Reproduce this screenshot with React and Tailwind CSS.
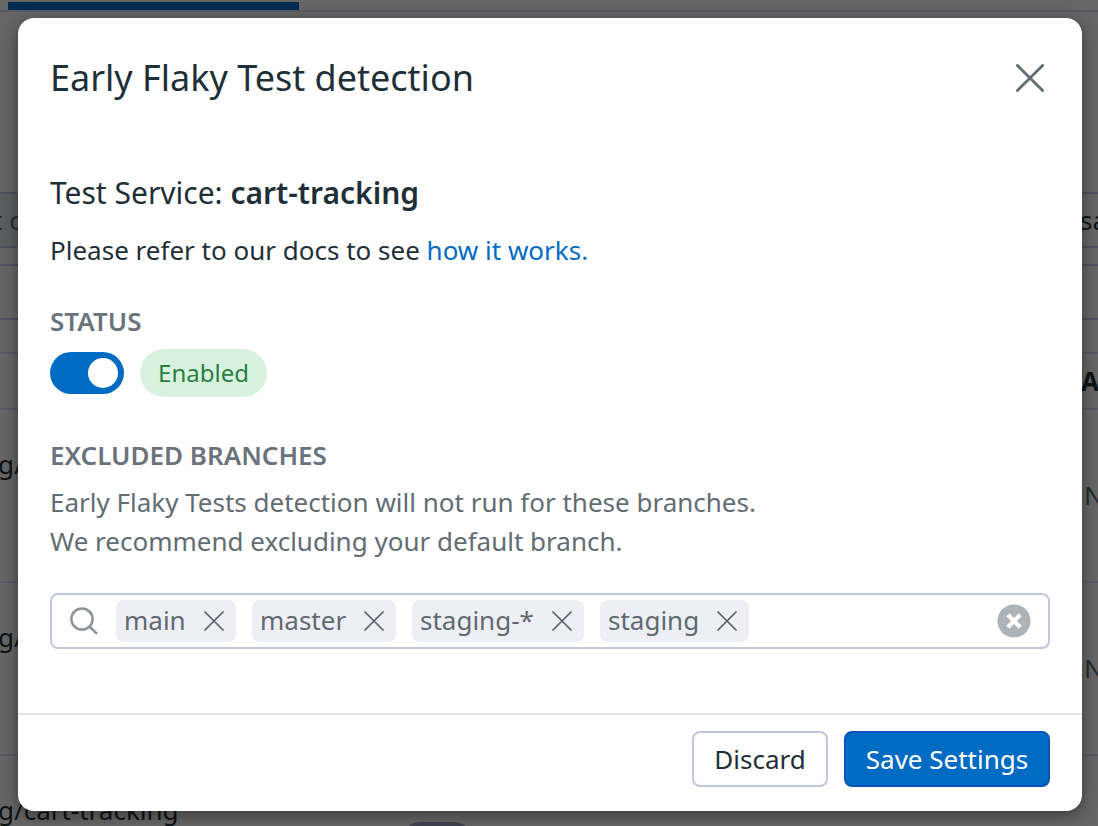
import React from 'react';

function Cross({ className, width }) {
  return (
    <svg viewBox="0 0 20 20" fill="none" stroke="currentColor" strokeWidth={width} strokeLinecap="round" className={className}>
      <path d="M1 1 19 19M19 1 1 19" />
    </svg>
  );
}

function Tag({ label, className }) {
  return (
    <span className={`flex h-[42px] shrink-0 items-center justify-between rounded-lg bg-[#eeeff5] pr-3 pl-2 ${className}`}>
      <span className="pb-[2px] leading-9 whitespace-nowrap">{label}</span>
      <Cross width={1.7} className="size-5 text-[#566069]" />
    </span>
  );
}

function Row({ name, className }) {
  return (
    <div className={`flex shrink-0 justify-between overflow-hidden border-[#5b5b64] ${className}`}>
      <span className="-ml-[2px] pt-[34px] leading-[40px] whitespace-nowrap text-[#0d1417]">{name}</span>
      <span className="w-[14px] shrink-0 pt-[65px] leading-[40px] text-[#272c2f]">N</span>
    </div>
  );
}

function Backdrop() {
  return (
    <div className="flex h-full flex-col overflow-hidden bg-[#666] text-[26px]">
      <div className="h-3 shrink-0 border-b-2 border-[#5b5b64] pt-[2px] pl-2">
        <div className="h-2 w-[291px] bg-[#002c52]" />
      </div>
      <div className="mt-[180px] flex h-14 shrink-0 items-center justify-between border-y-2 border-[#50545f]">
        <div className="flex h-full w-[540px] items-center bg-[#5d5e63]">
          <span className="-ml-[7px] leading-10 text-[#272c2f]">t c</span>
        </div>
        <span className="w-[18px] overflow-hidden leading-10 text-[#0d1417]">sa</span>
      </div>
      <div className="mt-4 h-14 shrink-0 border-y-2 border-[#50545f]" />
      <div className="mt-8 flex h-[58px] shrink-0 items-center justify-end border-y-2 border-[#5b5b64]">
        <span className="w-[17px] font-bold text-[#0d1417]">A</span>
      </div>
      <Row name="g/" className="h-[173px] border-b-2" />
      <Row name="g/" className="h-[173px] border-b-2" />
      <div className="flex h-[70px] shrink-0 overflow-hidden">
        <span className="-ml-[2px] w-[402px] shrink-0 pt-[34px] leading-[40px] text-[#0d1417]">g/cart-tracking</span>
        <div className="mt-[66px] h-[42px] w-[74px] shrink-0 rounded-full bg-[#40434e]" />
      </div>
    </div>
  );
}

export default function App() {
  return (
    <div className="relative h-[826px] w-[1098px] overflow-hidden font-['Noto_Sans',sans-serif]">
      <Backdrop />
      <div className="absolute inset-0 flex pt-[18px] pr-4 pb-[15px] pl-[18px]">
        <section className="flex w-full flex-col rounded-2xl bg-white text-[26px] text-[#1f2f38] shadow-[0_4px_16px_rgba(0,0,0,0.45)]">
          <header className="flex h-[120px] shrink-0 items-center justify-between pr-[38px] pl-8">
            <h1 className="text-[36px] leading-[48px]">Early Flaky Test detection</h1>
            <Cross width={2} className="size-7 text-[#626c73]" />
          </header>
          <main className="flex grow flex-col px-8">
            <h2 className="mt-[35px] text-[30px] leading-10">
              Test Service: <b className="font-semibold">cart-tracking</b>
            </h2>
            <p className="mt-[17px] leading-10">
              Please refer to our docs to see <a className="text-[#006bc2]">how it works.</a>
            </p>
            <h3 className="mt-[31px] leading-10 font-semibold text-[#6a737b]">STATUS</h3>
            <div className="mt-2 flex h-12 items-center gap-4">
              <div className="flex h-[42px] w-[74px] items-center justify-end rounded-full bg-[#006bc2] pr-[6px]">
                <div className="size-[30px] rounded-full bg-white" />
              </div>
              <span className="flex h-12 w-[127px] items-center justify-center rounded-full bg-[#d9f2e0] text-[24px] text-[#2a7e41]">Enabled</span>
            </div>
            <h3 className="mt-[38px] leading-10 font-semibold text-[#6a737b]">EXCLUDED BRANCHES</h3>
            <p className="mt-[8px] leading-[39px] text-[#626c73]">
              Early Flaky Tests detection will not run for these branches.
              <br />
              We recommend excluding your default branch.
            </p>
            <div className="mt-8 flex h-14 items-center rounded-lg border-2 border-[#c0c7df] pr-[17px] pl-[18px] text-[#5f6a70]">
              <svg viewBox="0 0 28 28" fill="none" stroke="#8b9598" strokeWidth="2.5" className="mr-[18px] size-7 shrink-0">
                <circle cx="12" cy="12" r="10.6" />
                <path d="m19.5 19.5 7.5 7.3" />
              </svg>
              <div className="flex gap-4">
                <Tag label="main" className="w-[120px]" />
                <Tag label="master" className="w-[144px]" />
                <Tag label="staging-*" className="w-[172px]" />
                <Tag label="staging" className="w-[149px]" />
              </div>
              <svg viewBox="0 0 34 34" className="ml-auto size-[34px] shrink-0">
                <circle cx="17" cy="17" r="16.6" fill="#adb3b6" />
                <path d="m10.8 10.8 12.4 12.4M23.2 10.8 10.8 23.2" stroke="#fff" strokeWidth="4.2" />
              </svg>
            </div>
          </main>
          <footer className="flex h-[98px] shrink-0 justify-end gap-4 border-t-2 border-[#e1e3ef] pt-4 pr-8">
            <button className="h-14 w-[136px] rounded-lg border-2 border-[#c0c7df]">Discard</button>
            <button className="h-14 w-[206px] rounded-lg border-2 border-[#0756b8] bg-[#006bc2] text-white">Save Settings</button>
          </footer>
        </section>
      </div>
    </div>
  );
}
